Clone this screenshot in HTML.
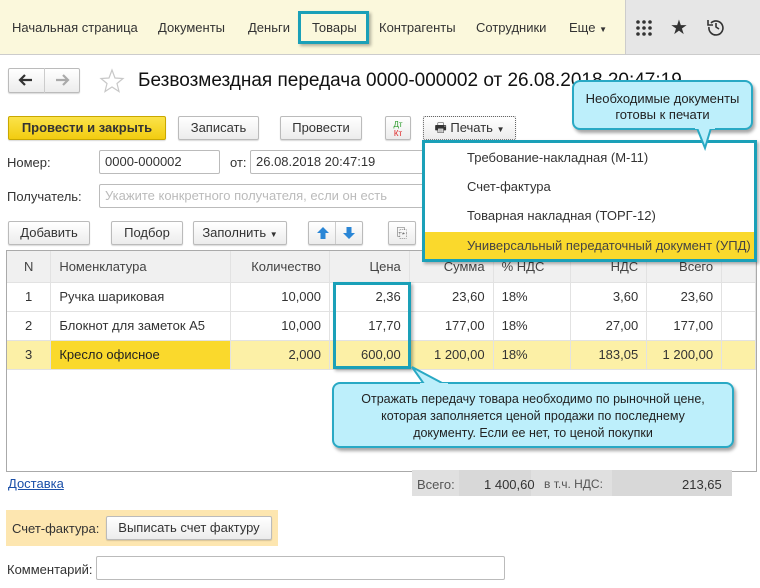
<!DOCTYPE html><html><head><meta charset="utf-8"><style>
*{box-sizing:border-box;margin:0;padding:0}
body{width:760px;height:588px;overflow:hidden;background:#fff;font-family:"Liberation Sans",sans-serif;font-size:13px;color:#333;position:relative}
.a{position:absolute;white-space:nowrap}
.btn{position:absolute;border:1px solid #bbb;border-radius:2px;background:linear-gradient(#fff,#ececec);text-align:center;line-height:22px;height:24px;box-shadow:0 1px 1px rgba(0,0,0,.15)}
.inp{position:absolute;border:1px solid #bbb;border-radius:2px;background:#fff;height:24px;line-height:22px;padding-left:5px}
.tb td{border-right:1px solid #e2e2e2;border-bottom:1px solid #e2e2e2;padding:0 8px;height:29px;white-space:nowrap}
.call{position:absolute;background:#bdeffb;border:2px solid #29a9c4;border-radius:8px;text-align:center;color:#222;box-shadow:2px 3px 3px rgba(0,0,0,.35)}
</style></head><body>
<div class="a" style="left:0;top:0;width:625px;height:55px;background:#fbf8dc;border-bottom:1px solid #ccc"></div>
<div class="a" style="left:625px;top:0;width:135px;height:55px;background:#e6e6e6;border-left:1px solid #ccc;border-bottom:1px solid #ccc"></div>
<div class="a" style="top:20px;left:12px;color:#333">Начальная страница</div>
<div class="a" style="top:20px;left:158px">Документы</div>
<div class="a" style="top:20px;left:248px">Деньги</div>
<div class="a" style="top:20px;left:312px">Товары</div>
<div class="a" style="top:20px;left:379px">Контрагенты</div>
<div class="a" style="top:20px;left:476px">Сотрудники</div>
<div class="a" style="top:20px;left:569px">Еще <span style="font-size:8px">▼</span></div>
<div class="a" style="left:298px;top:11px;width:71px;height:33px;border:3px solid #1aa0b8;box-shadow:2px 2px 3px rgba(0,0,0,.3)"></div>
<svg class="a" style="left:636px;top:20px" width="16" height="16"><g fill="#333"><circle cx="2" cy="2" r="1.8"/><circle cx="8" cy="2" r="1.8"/><circle cx="14" cy="2" r="1.8"/><circle cx="2" cy="8" r="1.8"/><circle cx="8" cy="8" r="1.8"/><circle cx="14" cy="8" r="1.8"/><circle cx="2" cy="14" r="1.8"/><circle cx="8" cy="14" r="1.8"/><circle cx="14" cy="14" r="1.8"/></g></svg>
<div class="a" style="left:670px;top:15px;font-size:20px;color:#333">★</div>
<svg class="a" style="left:707px;top:18px" width="18" height="18"><path d="M4 5A7 7 0 1 1 2 9" fill="none" stroke="#333" stroke-width="1.6"/><path d="M1 2v5h5" fill="none" stroke="#333" stroke-width="1.6"/><path d="M9 5v4l3 2" fill="none" stroke="#333" stroke-width="1.6"/></svg>
<div class="btn" style="left:8px;top:68px;width:72px;height:25px"></div>
<div class="a" style="left:44px;top:68px;width:1px;height:25px;background:#ccc"></div>
<svg class="a" style="left:18px;top:74px" width="16" height="12"><path d="M14 6H3M7 1L2 6L7 11" fill="none" stroke="#333" stroke-width="2.2"/></svg>
<svg class="a" style="left:54px;top:74px" width="16" height="12"><path d="M2 6H13M9 1L14 6L9 11" fill="none" stroke="#aaa" stroke-width="2.2"/></svg>
<svg class="a" style="left:99px;top:68px" width="26" height="26"><path d="M13 2L16 10L24 10.5L18 15.5L20 23.5L13 19L6 23.5L8 15.5L2 10.5L10 10Z" fill="none" stroke="#c8c8c8" stroke-width="1.2"/></svg>
<div class="a" style="left:138px;top:70px;font-size:19px;color:#111">Безвозмездная передача 0000-000002 от 26.08.2018 20:47:19</div>
<div class="btn" style="left:8px;top:116px;width:158px;background:linear-gradient(#fbe34a,#f2cc10);border-color:#c9a800;font-weight:bold;color:#333">Провести и закрыть</div>
<div class="btn" style="left:178px;top:116px;width:81px">Записать</div>
<div class="btn" style="left:280px;top:116px;width:82px">Провести</div>
<div class="btn" style="left:385px;top:116px;width:26px;font-size:8px;line-height:9px;padding-top:3px"><span style="color:#2a9a2a">Дт</span><br><span style="color:#d22">Кт</span></div>
<div class="btn" style="left:423px;top:116px;width:93px;border-style:dotted;border-color:#666">🖶 Печать <span style="font-size:8px">▼</span></div>
<div class="a" style="left:7px;top:155px">Номер:</div>
<div class="inp" style="left:99px;top:150px;width:121px">0000-000002</div>
<div class="a" style="left:230px;top:155px">от:</div>
<div class="inp" style="left:250px;top:150px;width:175px">26.08.2018 20:47:19</div>
<div class="a" style="left:7px;top:189px">Получатель:</div>
<div class="inp" style="left:99px;top:184px;width:326px;color:#bbb">Укажите конкретного получателя, если он есть</div>
<div class="btn" style="left:8px;top:221px;width:82px">Добавить</div>
<div class="btn" style="left:111px;top:221px;width:72px">Подбор</div>
<div class="btn" style="left:193px;top:221px;width:94px">Заполнить <span style="font-size:8px">▼</span></div>
<div class="btn" style="left:308px;top:221px;width:55px"></div>
<div class="a" style="left:335px;top:222px;width:1px;height:22px;background:#ccc"></div>
<svg class="a" style="left:316px;top:226px" width="14" height="14"><path d="M7 1L13 7H9.5V13H4.5V7H1Z" fill="#2a86d6"/></svg>
<svg class="a" style="left:342px;top:226px" width="14" height="14"><path d="M7 13L13 7H9.5V1H4.5V7H1Z" fill="#2a86d6"/></svg>
<div class="btn" style="left:388px;top:221px;width:28px;color:#666">⎘</div>
<div class="a" style="left:6px;top:250px;width:751px;height:222px;border:1px solid #aaa;overflow:hidden">
<table class="tb" style="position:absolute;left:0;top:0;border-collapse:collapse;font-size:13px">
<tr style="background:#f0f0f0;color:#444"><td style="width:44px;height:31px;text-align:center">N</td><td style="width:180px">Номенклатура</td><td style="width:99px;text-align:right">Количество</td><td style="width:80px;text-align:right">Цена</td><td style="width:84px;text-align:right">Сумма</td><td style="width:78px">% НДС</td><td style="width:76px;text-align:right">НДС</td><td style="width:75px;text-align:right">Всего</td><td style="width:34px"></td></tr>
<tr><td style="text-align:center">1</td><td>Ручка шариковая</td><td style="text-align:right">10,000</td><td style="text-align:right">2,36</td><td style="text-align:right">23,60</td><td>18%</td><td style="text-align:right">3,60</td><td style="text-align:right">23,60</td><td></td></tr>
<tr><td style="text-align:center">2</td><td>Блокнот для заметок А5</td><td style="text-align:right">10,000</td><td style="text-align:right">17,70</td><td style="text-align:right">177,00</td><td>18%</td><td style="text-align:right">27,00</td><td style="text-align:right">177,00</td><td></td></tr>
<tr style="background:#fcf0a6"><td style="text-align:center">3</td><td style="background:#fad92c;color:#222">Кресло офисное</td><td style="text-align:right">2,000</td><td style="text-align:right">600,00</td><td style="text-align:right">1 200,00</td><td>18%</td><td style="text-align:right">183,05</td><td style="text-align:right">1 200,00</td><td></td></tr>
</table></div>
<div class="a" style="left:333px;top:282px;width:78px;height:87px;border:3px solid #1aa0b8;box-shadow:2px 2px 3px rgba(0,0,0,.3)"></div>
<div class="a" style="left:422px;top:140px;width:335px;height:122px;border:3px solid #1aa0b8;background:#fff;box-shadow:2px 2px 3px rgba(0,0,0,.3)"></div>
<div class="a" style="left:467px;top:150px">Требование-накладная (М-11)</div>
<div class="a" style="left:467px;top:179px">Счет-фактура</div>
<div class="a" style="left:467px;top:208px">Товарная накладная (ТОРГ-12)</div>
<div class="a" style="left:425px;top:232px;width:329px;height:27px;background:#fad92c"></div>
<div class="a" style="left:467px;top:238px;color:#444">Универсальный передаточный документ (УПД)</div>
<div class="call" style="left:572px;top:80px;width:181px;height:50px;padding-top:9px;line-height:16px">Необходимые документы<br>готовы к печати</div>
<svg class="a" style="left:695px;top:127px" width="30" height="24"><path d="M2 1L16 1L10 21Z" fill="#bdeffb" stroke="#29a9c4" stroke-width="2"/><rect x="0" y="0" width="20" height="2" fill="#bdeffb"/></svg>
<div class="call" style="left:332px;top:382px;width:402px;height:66px;padding-top:7px;line-height:17px;font-size:12.5px">Отражать передачу товара необходимо по рыночной цене,<br>которая заполняется ценой продажи по последнему<br>документу. Если ее нет, то ценой покупки</div>
<svg class="a" style="left:410px;top:366px" width="40" height="20"><path d="M2 1L14 18L34 18Z" fill="#bdeffb" stroke="#29a9c4" stroke-width="2"/><rect x="10" y="17" width="28" height="4" fill="#bdeffb"/></svg>
<div class="a" style="left:8px;top:476px;color:#1a4fa8;text-decoration:underline">Доставка</div>
<div class="a" style="left:412px;top:470px;width:320px;height:26px;background:#e0e0e0"></div>
<div class="a" style="left:459px;top:470px;width:72px;height:26px;background:#d8d8d8"></div>
<div class="a" style="left:612px;top:470px;width:120px;height:26px;background:#d8d8d8"></div>
<div class="a" style="left:417px;top:477px;color:#555">Всего:</div>
<div class="a" style="left:484px;top:477px">1 400,60</div>
<div class="a" style="left:544px;top:477px;color:#555;font-size:12px">в т.ч. НДС:</div>
<div class="a" style="left:682px;top:477px">213,65</div>
<div class="a" style="left:6px;top:510px;width:272px;height:36px;background:#fde6b0"></div>
<div class="a" style="left:12px;top:521px">Счет-фактура:</div>
<div class="btn" style="left:106px;top:516px;width:166px">Выписать счет фактуру</div>
<div class="a" style="left:7px;top:562px">Комментарий:</div>
<div class="inp" style="left:96px;top:556px;width:409px"></div>
</body></html>
